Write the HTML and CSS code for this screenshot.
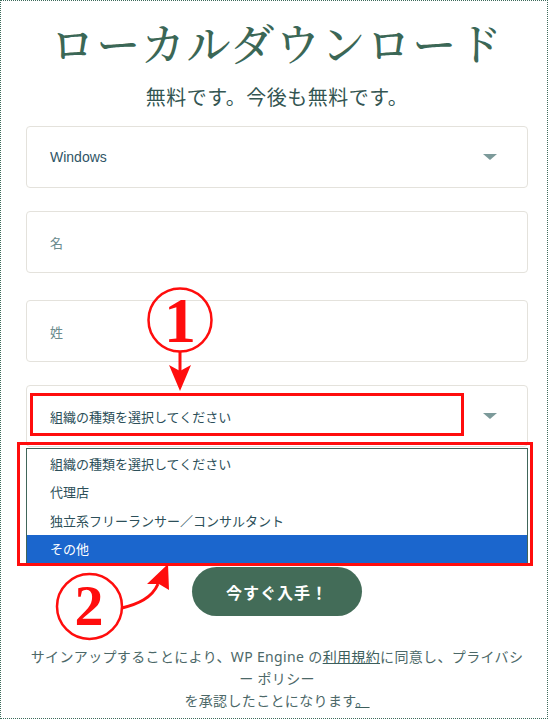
FILE: index.html
```html
<!DOCTYPE html>
<html lang="ja">
<head>
<meta charset="utf-8">
<title>ローカルダウンロード</title>
<link rel="stylesheet" href="styles.css">
</head>
<body>
<div class="page">
  <h1 class="title">ローカルダウンロード</h1>
  <p class="subtitle">無料です。今後も無料です。</p>
  <form class="form">
    <div class="field">
      <span class="value latin">Windows</span>
      <span class="caret"></span>
    </div>
    <div class="field">
      <span class="placeholder">名</span>
    </div>
    <div class="field field-wide">
      <span class="placeholder">姓</span>
    </div>
    <div class="field field-org">
      <span class="value">組織の種類を選択してください</span>
      <span class="caret"></span>
      <ul class="listbox">
        <li class="option">組織の種類を選択してください</li>
        <li class="option">代理店</li>
        <li class="option">独立系フリーランサー／コンサルタント</li>
        <li class="option selected">その他</li>
      </ul>
    </div>
    <button type="button" class="cta">今すぐ入手！</button>
  </form>
  <p class="legal">
    <span class="line">サインアップすることにより、WP Engine の<a class="link">利用規約</a>に同意し、プライバシ</span>
    <span class="line">ー ポリシー</span>
    <span class="line">を承認したことになります<a class="link">。</a></span>
  </p>
  <svg class="annotations" width="548" height="719" viewBox="0 0 548 719">
    <rect x="31.5" y="394.5" width="431" height="40" fill="none" stroke="#ff0d0d" stroke-width="3"/>
    <rect x="18.5" y="443.5" width="513" height="121" fill="none" stroke="#ff0d0d" stroke-width="3"/>
    <circle cx="180" cy="320" r="31.5" fill="none" stroke="#ff0d0d" stroke-width="2.5"/>
    <text x="180" y="342" class="num">1</text>
    <line x1="180" y1="352" x2="180" y2="372" stroke="#ff0d0d" stroke-width="3"/>
    <path d="M169 365 L180 371 L191 365 L180 391 Z" fill="#ff0d0d"/>
    <circle cx="89.5" cy="606.5" r="32.5" fill="none" stroke="#ff0d0d" stroke-width="2.5"/>
    <text x="89" y="625" class="num num2">2</text>
    <path d="M122 608 C138 604 152 598 158 584" fill="none" stroke="#ff0d0d" stroke-width="3"/>
    <path d="M147 584 L168 564 L169 590 L159 584 Z" fill="#ff0d0d"/>
  </svg>
</div>
</body>
</html>
```

FILE: styles.css
```css
html, body {
  margin: 0;
  padding: 0;
  background: #ffffff;
}

.page {
  position: relative;
  width: 548px;
  height: 719px;
  box-sizing: border-box;
  border: 1px dotted #3d6a5b;
  padding: 13px 19px 0 25px;
  font-family: "Liberation Sans", "Noto Sans CJK JP", sans-serif;
  overflow: hidden;
}

.title {
  margin: 0;
  font-family: "Noto Serif CJK JP", "Noto Sans CJK JP", serif;
  font-weight: 500;
  font-size: 44px;
  line-height: 56px;
  text-align: center;
  color: #3b6756;
  letter-spacing: 1.5px;
}

.subtitle {
  margin: 13px 0 0;
  font-family: "Noto Sans CJK JP", sans-serif;
  font-size: 20px;
  line-height: 28px;
  text-align: center;
  color: #335552;
  letter-spacing: 0.5px;
}

.form {
  margin: 15px 0 0;
  display: flex;
  flex-direction: column;
  gap: 23px;
}

.field {
  position: relative;
  height: 62px;
  box-sizing: border-box;
  border: 1px solid #e4e2dc;
  border-radius: 4px;
  display: flex;
  align-items: center;
  justify-content: space-between;
  padding: 0 30px 0 23px;
  background: #ffffff;
}

.field-wide {
  margin-top: 4px;
}

.value {
  font-family: "Noto Sans CJK JP", sans-serif;
  font-size: 13px;
  color: #2c4f59;
}

.value.latin {
  font-family: "Liberation Sans", sans-serif;
  font-size: 14px;
  color: #2f5566;
}

.placeholder {
  font-family: "Noto Sans CJK JP", sans-serif;
  font-size: 13px;
  color: #6b8c8e;
}

.caret {
  width: 0;
  height: 0;
  border-left: 7px solid transparent;
  border-right: 7px solid transparent;
  border-top: 6px solid #7c9a9a;
}

.listbox {
  position: absolute;
  left: -1px;
  top: 62px;
  width: 502px;
  box-sizing: border-box;
  margin: 0;
  padding: 0;
  list-style: none;
  border: 1px solid #41665a;
  background: #ffffff;
  z-index: 2;
}

.option {
  height: 28.5px;
  display: flex;
  align-items: center;
  padding-left: 23px;
  font-family: "Noto Sans CJK JP", sans-serif;
  font-size: 13px;
  color: #2c4f59;
}

.option.selected {
  background: #1b66cd;
  color: #ffffff;
}

.cta {
  align-self: center;
  margin-top: 97px;
  width: 170px;
  height: 49px;
  border: none;
  border-radius: 25px;
  background: #436c58;
  color: #ffffff;
  font-family: "Noto Sans CJK JP", sans-serif;
  font-weight: 700;
  font-size: 16px;
  letter-spacing: 1px;
  padding: 0;
}

.legal {
  margin: 30px 0 0;
  text-align: center;
  font-family: "Noto Sans", "Noto Sans CJK JP", sans-serif;
  font-size: 14px;
  line-height: 22px;
  letter-spacing: 0.35px;
  color: #4c6868;
}

.line {
  display: block;
  white-space: nowrap;
}

.link {
  color: #3c5e5c;
  text-decoration: underline;
}

.annotations {
  position: absolute;
  left: -1px;
  top: -1px;
  pointer-events: none;
  z-index: 5;
}

.num {
  font-family: "Liberation Serif", serif;
  font-weight: 700;
  font-size: 64px;
  fill: #ff0d0d;
  text-anchor: middle;
}

.num2 {
  font-size: 58px;
}
```
